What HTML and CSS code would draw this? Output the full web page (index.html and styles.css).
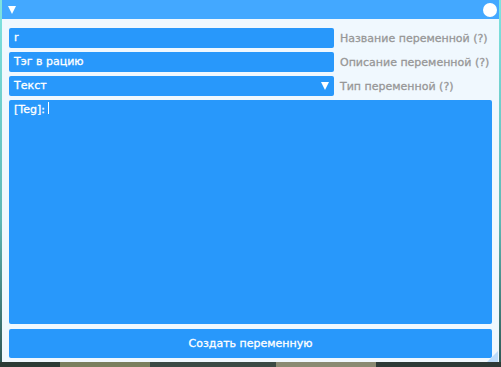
FILE: index.html
```html
<!DOCTYPE html>
<html>
<head>
<meta charset="utf-8">
<link rel="stylesheet" href="styles.css">
</head>
<body>
<div class="window">
  <div class="titlebar">
    <span class="collapse"></span>
    <span class="close"></span>
  </div>
  <div class="content">
    <div class="row">
      <div class="field">r</div>
      <div class="label">Название переменной (?)</div>
    </div>
    <div class="row">
      <div class="field">Тэг в рацию</div>
      <div class="label">Описание переменной (?)</div>
    </div>
    <div class="row">
      <div class="field combo">Текст<span class="arrow"></span></div>
      <div class="label">Тип переменной (?)</div>
    </div>
    <div class="multiline">[Teg]: <span class="caret"></span></div>
    <div class="button">Создать переменную</div>
  </div>
  <span class="grip"></span>
</div>
<div class="ground"></div>
</body>
</html>
```
FILE: styles.css
```css
html, body {
  margin: 0;
  padding: 0;
  width: 501px;
  height: 367px;
  overflow: hidden;
}
body {
  background: linear-gradient(180deg, #7fe3e0 0%, #5fb8b5 60%, #2f5553 100%);
  font-family: "DejaVu Sans", Verdana, sans-serif;
  font-size: 11px;
  -webkit-text-stroke: 0.3px currentColor;
  position: relative;
}
.window {
  position: relative;
  margin-left: 2px;
  width: 497px;
  height: 362px;
  background: #f0f8fe;
  display: flex;
  flex-direction: column;
}
.titlebar {
  height: 19px;
  background: #43a8ff;
  display: flex;
  align-items: center;
  justify-content: space-between;
  padding: 0 2px 0 6px;
}
.collapse {
  width: 0;
  height: 0;
  border-left: 4.5px solid transparent;
  border-right: 4.5px solid transparent;
  border-top: 8px solid #fff;
}
.close {
  width: 14px;
  height: 14px;
  border-radius: 50%;
  background: #fff;
}
.content {
  flex: 1;
  display: flex;
  flex-direction: column;
  gap: 4px;
  padding: 9px 7px 4px 7px;
}
.row {
  display: flex;
  align-items: center;
  gap: 6px;
  height: 20px;
}
.field {
  flex: 0 0 325px;
  height: 20px;
  box-sizing: border-box;
  background: #2898fb;
  border-radius: 2px;
  color: #fff;
  padding: 0 5px;
  line-height: 20px;
  position: relative;
}
.arrow {
  position: absolute;
  right: 5px;
  top: 6px;
  width: 0;
  height: 0;
  border-left: 4.5px solid transparent;
  border-right: 4.5px solid transparent;
  border-top: 8px solid #fff;
}
.label {
  color: #979797;
  white-space: nowrap;
}
.multiline {
  flex: 1;
  background: #2898fb;
  border-radius: 2px;
  color: #fff;
  padding: 2px 5px;
  line-height: 16px;
}
.caret {
  display: inline-block;
  width: 1px;
  height: 12px;
  background: #fff;
  vertical-align: -1px;
}
.button {
  margin-top: 1px;
  height: 29px;
  background: #2898fb;
  border-radius: 2px;
  color: #fff;
  display: flex;
  align-items: center;
  justify-content: center;
}
.grip {
  position: absolute;
  right: 1px;
  bottom: 0;
  width: 0;
  height: 0;
  border-left: 11px solid transparent;
  border-bottom: 11px solid #bcdcfb;
}
.ground {
  height: 5px;
  background: linear-gradient(90deg, #2c3b35 0 12%, #7a7f5e 12% 30%, #3b4a44 30% 55%, #8a8a72 55% 75%, #2d3a36 75% 100%);
}
```
